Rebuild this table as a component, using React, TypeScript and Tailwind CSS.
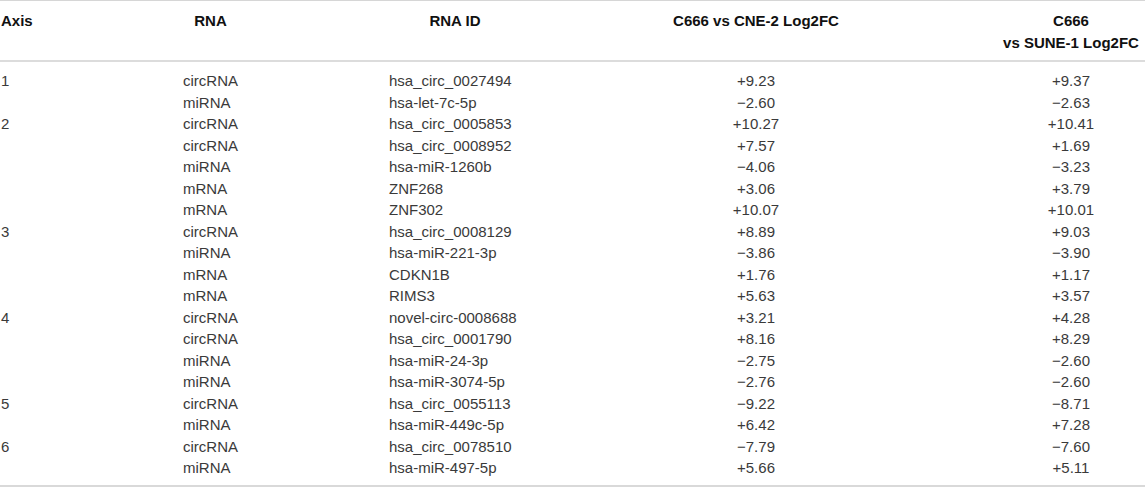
const rows: [string, string, string, string, string][] = [
  ["1", "circRNA", "hsa_circ_0027494", "+9.23", "+9.37"],
  ["", "miRNA", "hsa-let-7c-5p", "−2.60", "−2.63"],
  ["2", "circRNA", "hsa_circ_0005853", "+10.27", "+10.41"],
  ["", "circRNA", "hsa_circ_0008952", "+7.57", "+1.69"],
  ["", "miRNA", "hsa-miR-1260b", "−4.06", "−3.23"],
  ["", "mRNA", "ZNF268", "+3.06", "+3.79"],
  ["", "mRNA", "ZNF302", "+10.07", "+10.01"],
  ["3", "circRNA", "hsa_circ_0008129", "+8.89", "+9.03"],
  ["", "miRNA", "hsa-miR-221-3p", "−3.86", "−3.90"],
  ["", "mRNA", "CDKN1B", "+1.76", "+1.17"],
  ["", "mRNA", "RIMS3", "+5.63", "+3.57"],
  ["4", "circRNA", "novel-circ-0008688", "+3.21", "+4.28"],
  ["", "circRNA", "hsa_circ_0001790", "+8.16", "+8.29"],
  ["", "miRNA", "hsa-miR-24-3p", "−2.75", "−2.60"],
  ["", "miRNA", "hsa-miR-3074-5p", "−2.76", "−2.60"],
  ["5", "circRNA", "hsa_circ_0055113", "−9.22", "−8.71"],
  ["", "miRNA", "hsa-miR-449c-5p", "+6.42", "+7.28"],
  ["6", "circRNA", "hsa_circ_0078510", "−7.79", "−7.60"],
  ["", "miRNA", "hsa-miR-497-5p", "+5.66", "+5.11"],
];

const cols = "grid grid-cols-[183px_206px_278px_178px_1fr]";

export default function App() {
  return (
    <div className="w-[1145px] h-[487px] bg-white font-['Liberation_Sans',Arial,sans-serif] text-[15px] leading-[21.5px]">
      {/* header */}
      <div className={`${cols} border-t border-[#d6d6d6] border-b-2 border-b-[#dcdcdc] pt-[9px] pb-[7px] font-bold text-[#111]`}>
        <div className="pl-[1px]">Axis</div>
        <div>
          <div className="w-[55px] text-center">RNA</div>
        </div>
        <div>
          <div className="w-[132px] text-center">RNA ID</div>
        </div>
        <div className="text-center whitespace-nowrap">C666 vs CNE-2 Log2FC</div>
        <div className="pl-[152px] text-center whitespace-nowrap">
          <div>C666</div>
          <div>vs SUNE-1 Log2FC</div>
        </div>
      </div>

      {/* body */}
      <div className="pt-[8px] pb-[6px] border-b-2 border-[#d9d9d9] text-[#3a3a3a]">
        {rows.map((r, i) => (
          <div key={i} className={`${cols} h-[21.5px]`}>
            <div className="pl-[1px]">{r[0]}</div>
            <div>{r[1]}</div>
            <div>{r[2]}</div>
            <div className="text-center">{r[3]}</div>
            <div className="pl-[152px] text-center">{r[4]}</div>
          </div>
        ))}
      </div>
    </div>
  );
}
